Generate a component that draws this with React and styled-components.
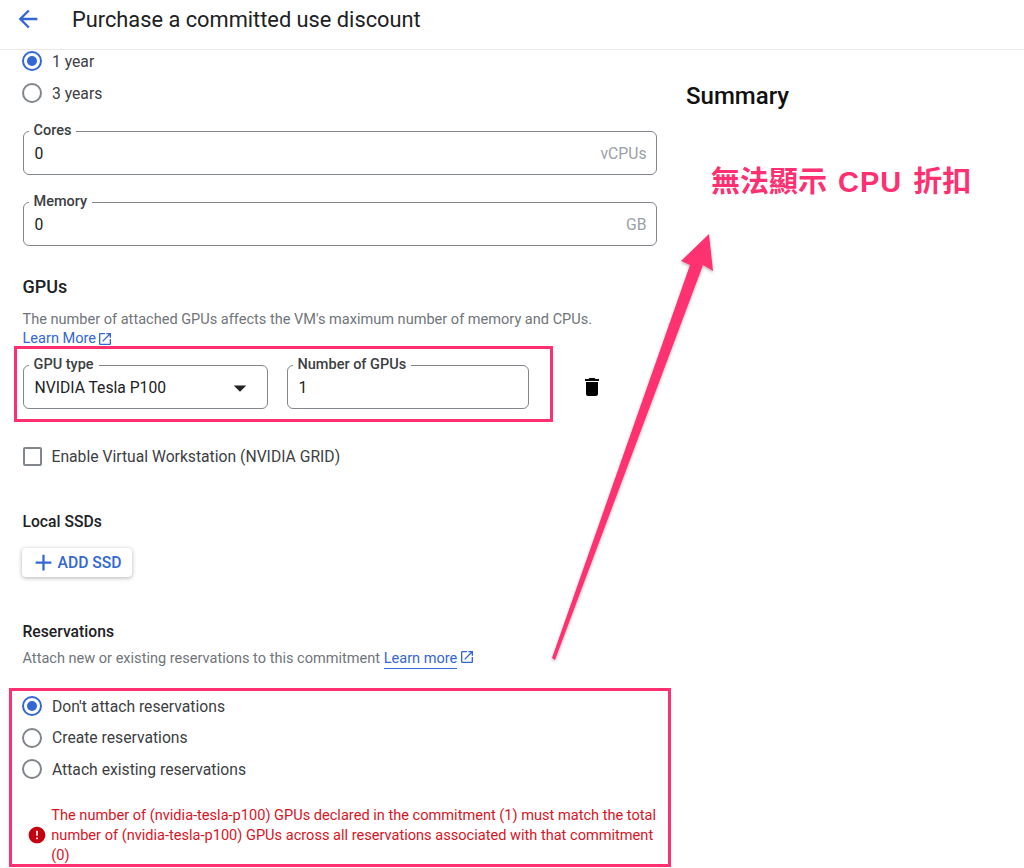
import styled, { createGlobalStyle } from 'styled-components';
import { MdArrowBack, MdDelete, MdOpenInNew, MdError, MdAdd, MdArrowDropDown } from 'react-icons/md';

const PINK = '#ff3071';
const BLUE = '#3367d6';

const GlobalStyle = createGlobalStyle`
html, body {
    margin: 0;
    padding: 0;
    background: #fff;
    overflow: hidden;
}
body {
    font-family: Roboto, "Liberation Sans", sans-serif;
    color: #202124;
}
* {
    box-sizing: border-box;
}
`;

const Radio = ({ checked, label }) => (
    <RadioRow>
        <RadioCircle $checked={checked} />
        <RadioText>{label}</RadioText>
    </RadioRow>
);

const Field = ({ label, value, suffix, select, width }) => (
    <FieldBox $width={width}>
        <FieldLabel>{label}</FieldLabel>
        <FieldValue>{value}</FieldValue>
        {suffix && <FieldSuffix>{suffix}</FieldSuffix>}
        {select && (
            <DropIcon>
                <MdArrowDropDown size={30} color="#202124" />
            </DropIcon>
        )}
    </FieldBox>
);

const App = () => {
    return (
        <Page>
            <GlobalStyle />
            <Header>
                <BackButton>
                    <MdArrowBack size={28} />
                </BackButton>
                <Title>Purchase a committed use discount</Title>
            </Header>

            <Main>
                <FormColumn>
                    <RadioGroup>
                        <Radio checked label="1 year" />
                        <Radio label="3 years" />
                    </RadioGroup>

                    <FieldStack>
                        <Field label="Cores" value="0" suffix="vCPUs" />
                        <Field label="Memory" value="0" suffix="GB" />
                    </FieldStack>

                    <GpuHeading>GPUs</GpuHeading>
                    <HelpText>The number of attached GPUs affects the VM's maximum number of memory and CPUs.</HelpText>
                    <PlainLink>
                        Learn More <MdOpenInNew size={16} />
                    </PlainLink>

                    <GpuRow>
                        <Field select label="GPU type" value="NVIDIA Tesla P100" width="245px" />
                        <Field label="Number of GPUs" value="1" width="242px" />
                        <TrashButton>
                            <MdDelete size={24} />
                        </TrashButton>
                        <Highlight $top={-19} $left={-9} $width={539} $height={76} />
                    </GpuRow>

                    <CheckRow>
                        <CheckBox />
                        <RadioText>Enable Virtual Workstation (NVIDIA GRID)</RadioText>
                    </CheckRow>

                    <SubHeading $top={47}>Local SSDs</SubHeading>
                    <AddButton>
                        <MdAdd size={27} />
                        ADD SSD
                    </AddButton>

                    <SubHeading $top={46}>Reservations</SubHeading>
                    <HelpText $top={9}>
                        Attach new or existing reservations to this commitment{' '}
                        <UnderlinedLink>Learn more</UnderlinedLink>
                        <LinkIcon>
                            <MdOpenInNew size={16} />
                        </LinkIcon>
                    </HelpText>

                    <ReservationBlock>
                        <RadioGroup $gap={11.5}>
                            <Radio checked label="Don't attach reservations" />
                            <Radio label="Create reservations" />
                            <Radio label="Attach existing reservations" />
                        </RadioGroup>
                        <ErrorRow>
                            <ErrorIcon>
                                <MdError size={20} />
                            </ErrorIcon>
                            <ErrorText>
                                The number of (nvidia-tesla-p100) GPUs declared in the commitment (1) must match the
                                total number of (nvidia-tesla-p100) GPUs across all reservations associated with that
                                commitment (0)
                            </ErrorText>
                        </ErrorRow>
                        <Highlight $top={-8} $left={-14} $width={662} $height={179} />
                    </ReservationBlock>
                </FormColumn>

                <SummaryColumn>
                    <SummaryTitle>Summary</SummaryTitle>
                    <Annotation>
                        無法顯示 <Latin>CPU</Latin> 折扣
                    </Annotation>
                </SummaryColumn>
            </Main>

            <ArrowOverlay viewBox="0 0 1024 868">
                <defs>
                    <filter id="arrowShadow" x="-20%" y="-20%" width="140%" height="140%">
                        <feDropShadow dx="0" dy="1.5" stdDeviation="1.5" floodColor="#000" floodOpacity="0.3" />
                    </filter>
                </defs>
                <polygon
                    fill={PINK}
                    filter="url(#arrowShadow)"
                    points="552,658 555,660 703,265 713,271 709,234 681,261 690,265"
                />
            </ArrowOverlay>
        </Page>
    );
};

const Page = styled.div`
position: relative;
width: 1024px;
height: 868px;
overflow: hidden;
background: #fff;
`;

const Header = styled.header`
display: flex;
align-items: center;
height: 50px;
padding: 0 0 11px 14px;
border-bottom: 1px solid #e8e9eb;
`;

const BackButton = styled.div`
display: flex;
width: 58px;
color: ${BLUE};
`;

const Title = styled.h1`
margin: 0;
font-size: 21.8px;
font-weight: 400;
color: #202124;
`;

const Main = styled.main`
display: flex;
padding: 1px 0 0 22.5px;
`;

const FormColumn = styled.section`
width: 634px;
`;

const SummaryColumn = styled.aside`
margin-left: 29.5px;
padding-top: 32px;
`;

const SummaryTitle = styled.h2`
margin: 0;
font-size: 24px;
line-height: 26px;
font-weight: 500;
color: #111;
`;

const Annotation = styled.div`
margin: 56px 0 0 25px;
font-family: "Liberation Sans", "Noto Sans CJK TC", sans-serif;
font-size: 29px;
line-height: 34px;
font-weight: 700;
word-spacing: 3px;
color: ${PINK};
white-space: nowrap;
`;

const Latin = styled.span`
letter-spacing: 1px;
`;

const RadioGroup = styled.div`
display: flex;
flex-direction: column;
gap: ${(props) => props.$gap || 12}px;
`;

const RadioRow = styled.label`
display: flex;
align-items: center;
height: 20px;
margin-left: -0.5px;
gap: 10px;
`;

const RadioCircle = styled.span`
position: relative;
width: 20px;
height: 20px;
border-radius: 50%;
border: 2px solid ${(props) => (props.$checked ? BLUE : '#80868b')};

&:after {
    content: '';
    display: ${(props) => (props.$checked ? 'block' : 'none')};
    position: absolute;
    inset: 3px;
    border-radius: 50%;
    background: ${BLUE};
}
`;

const RadioText = styled.span`
font-size: 15.7px;
color: #3c4043;
`;

const FieldStack = styled.div`
display: flex;
flex-direction: column;
gap: 27px;
margin-top: 28px;
`;

const FieldBox = styled.div`
position: relative;
display: flex;
align-items: center;
justify-content: space-between;
width: ${(props) => props.$width || '100%'};
height: 44px;
padding: 1px 9px 0 11px;
border: 1px solid #80868b;
border-radius: 6px;
`;

const FieldLabel = styled.span`
position: absolute;
top: -9px;
left: 5px;
padding: 0 5px;
background: #fff;
font-size: 14.5px;
line-height: 16px;
font-weight: 500;
color: #3c4043;
`;

const FieldValue = styled.span`
font-size: 15.7px;
color: #202124;
`;

const FieldSuffix = styled.span`
font-size: 15.7px;
color: #9aa0a6;
`;

const DropIcon = styled.span`
display: flex;
margin-right: 3px;
`;

const GpuHeading = styled.h3`
margin: 31px 0 0;
font-size: 18px;
line-height: 19px;
font-weight: 500;
color: #202124;
`;

const HelpText = styled.p`
margin: ${(props) => props.$top || 15}px 0 0;
font-size: 14.55px;
line-height: 17px;
color: #70757a;
white-space: nowrap;
`;

const PlainLink = styled.a`
display: flex;
align-items: center;
gap: 1px;
margin-top: 2px;
font-size: 14.55px;
line-height: 17px;
color: ${BLUE};
`;

const GpuRow = styled.div`
position: relative;
display: flex;
align-items: center;
gap: 19px;
margin-top: 18px;
`;

const TrashButton = styled.div`
display: flex;
margin-left: 32px;
color: #000;
`;

const Highlight = styled.div`
position: absolute;
top: ${(props) => props.$top}px;
left: ${(props) => props.$left}px;
width: ${(props) => props.$width}px;
height: ${(props) => props.$height}px;
border: 3px solid ${PINK};
pointer-events: none;
`;

const CheckRow = styled.label`
display: flex;
align-items: center;
gap: 10px;
margin-top: 38px;
`;

const CheckBox = styled.span`
width: 19px;
height: 19px;
border: 2px solid #80868b;
border-radius: 2px;
`;

const SubHeading = styled.h4`
margin: ${(props) => props.$top}px 0 0;
font-size: 15.7px;
line-height: 17px;
font-weight: 500;
color: #202124;
`;

const AddButton = styled.button`
display: flex;
align-items: center;
gap: 1px;
width: 110px;
height: 29px;
margin: 18px 0 0 -1px;
padding: 0 0 0 8px;
border: none;
border-radius: 4px;
background: #fff;
box-shadow: 0 1px 4px rgba(60, 64, 67, 0.4);
font-family: Roboto, sans-serif;
font-size: 15.7px;
font-weight: 500;
color: ${BLUE};
`;

const UnderlinedLink = styled.a`
color: ${BLUE};
border-bottom: 1px solid ${BLUE};
padding-bottom: 1px;
`;

const LinkIcon = styled.span`
display: inline-flex;
margin-left: 2px;
vertical-align: -2px;
color: ${BLUE};
`;

const ReservationBlock = styled.div`
position: relative;
margin-top: 29px;
`;

const ErrorRow = styled.div`
display: flex;
align-items: center;
margin-top: 26px;
margin-left: 4px;
`;

const ErrorIcon = styled.div`
display: flex;
width: 25px;
color: #c5000f;
`;

const ErrorText = styled.p`
margin: 0;
width: 610px;
font-size: 14.58px;
line-height: 20px;
color: #d9141f;
`;

const ArrowOverlay = styled.svg`
position: absolute;
inset: 0;
width: 1024px;
height: 868px;
pointer-events: none;
`;

export default App;
